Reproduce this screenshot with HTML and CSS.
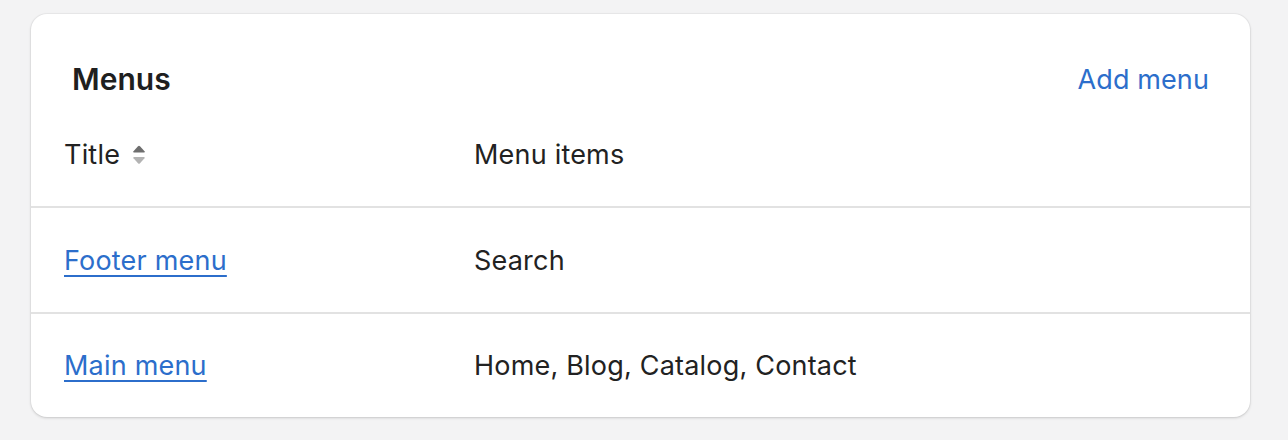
FILE: index.html
```html
<!DOCTYPE html>
<html>
<head>
<meta charset="utf-8">
<link rel="stylesheet" href="styles.css">
</head>
<body>
<div class="page">
  <section class="card">
    <header class="card-head">
      <h2 class="card-title">Menus</h2>
      <a class="add-link" href="#">Add menu</a>
    </header>
    <table class="menu-table">
      <thead>
        <tr>
          <th class="col-title">
            <span class="sort">Title
              <svg class="sort-icon" width="14" height="20" viewBox="0 0 14 20">
                <path d="M6 2.3 Q7 1.3 8 2.3 L12.5 7.3 Q13.2 8.5 12 8.5 H2 Q0.8 8.5 1.5 7.3 Z" fill="#6e6e6e"/>
                <path d="M6 19.2 Q7 20.2 8 19.2 L12.5 14.2 Q13.2 13 12 13 H2 Q0.8 13 1.5 14.2 Z" fill="#b3b3b3"/>
              </svg>
            </span>
          </th>
          <th class="col-items">Menu items</th>
        </tr>
      </thead>
      <tbody>
        <tr>
          <td class="col-title"><a href="#">Footer menu</a></td>
          <td class="col-items">Search</td>
        </tr>
        <tr class="last">
          <td class="col-title"><a href="#">Main menu</a></td>
          <td class="col-items">Home, Blog, Catalog, Contact</td>
        </tr>
      </tbody>
    </table>
  </section>
</div>
</body>
</html>
```

FILE: styles.css
```css
html, body {
  margin: 0;
  padding: 0;
  background: #f3f3f4;
  font-family: Inter, "Noto Sans", "Liberation Sans", sans-serif;
  color: #222;
}
.page {
  padding: 14px 38px 23px 31px;
}
.card {
  background: #fff;
  border-radius: 16px;
  box-shadow: 0 1px 3px rgba(0,0,0,0.16), 0 0 0 1px rgba(0,0,0,0.03);
  overflow: hidden;
}
.card-head {
  display: flex;
  justify-content: space-between;
  align-items: center;
  padding: 48px 41px 0 41px;
  height: 34px;
}
.card-title {
  margin: 0;
  font-size: 30px;
  font-weight: 600;
  color: #1f1f1f;
}
.add-link {
  font-size: 27px;
  color: #2c6ecb;
  text-decoration: none;
  letter-spacing: 0.1px;
}
.menu-table {
  width: 100%;
  border-collapse: collapse;
  margin-top: 21px;
  font-size: 27px;
  letter-spacing: 0.2px;
}
.menu-table th {
  font-weight: 400;
  text-align: left;
  height: 74px;
  padding: 0 0 15px 0;
  border-bottom: 2px solid #e2e2e2;
}
.menu-table td {
  height: 104px;
  padding: 0;
  border-bottom: 2px solid #e2e2e2;
}
.menu-table tr.last td {
  border-bottom: none;
  height: 103px;
}
.col-title {
  padding-left: 33px !important;
  width: 410px;
}
.menu-table a {
  color: #2c6ecb;
  text-decoration: underline;
  text-underline-offset: 5px;
  text-decoration-thickness: 2px;
}
.sort {
  display: inline-flex;
  align-items: center;
  gap: 12px;
}
.sort-icon {
  display: block;
}
```
